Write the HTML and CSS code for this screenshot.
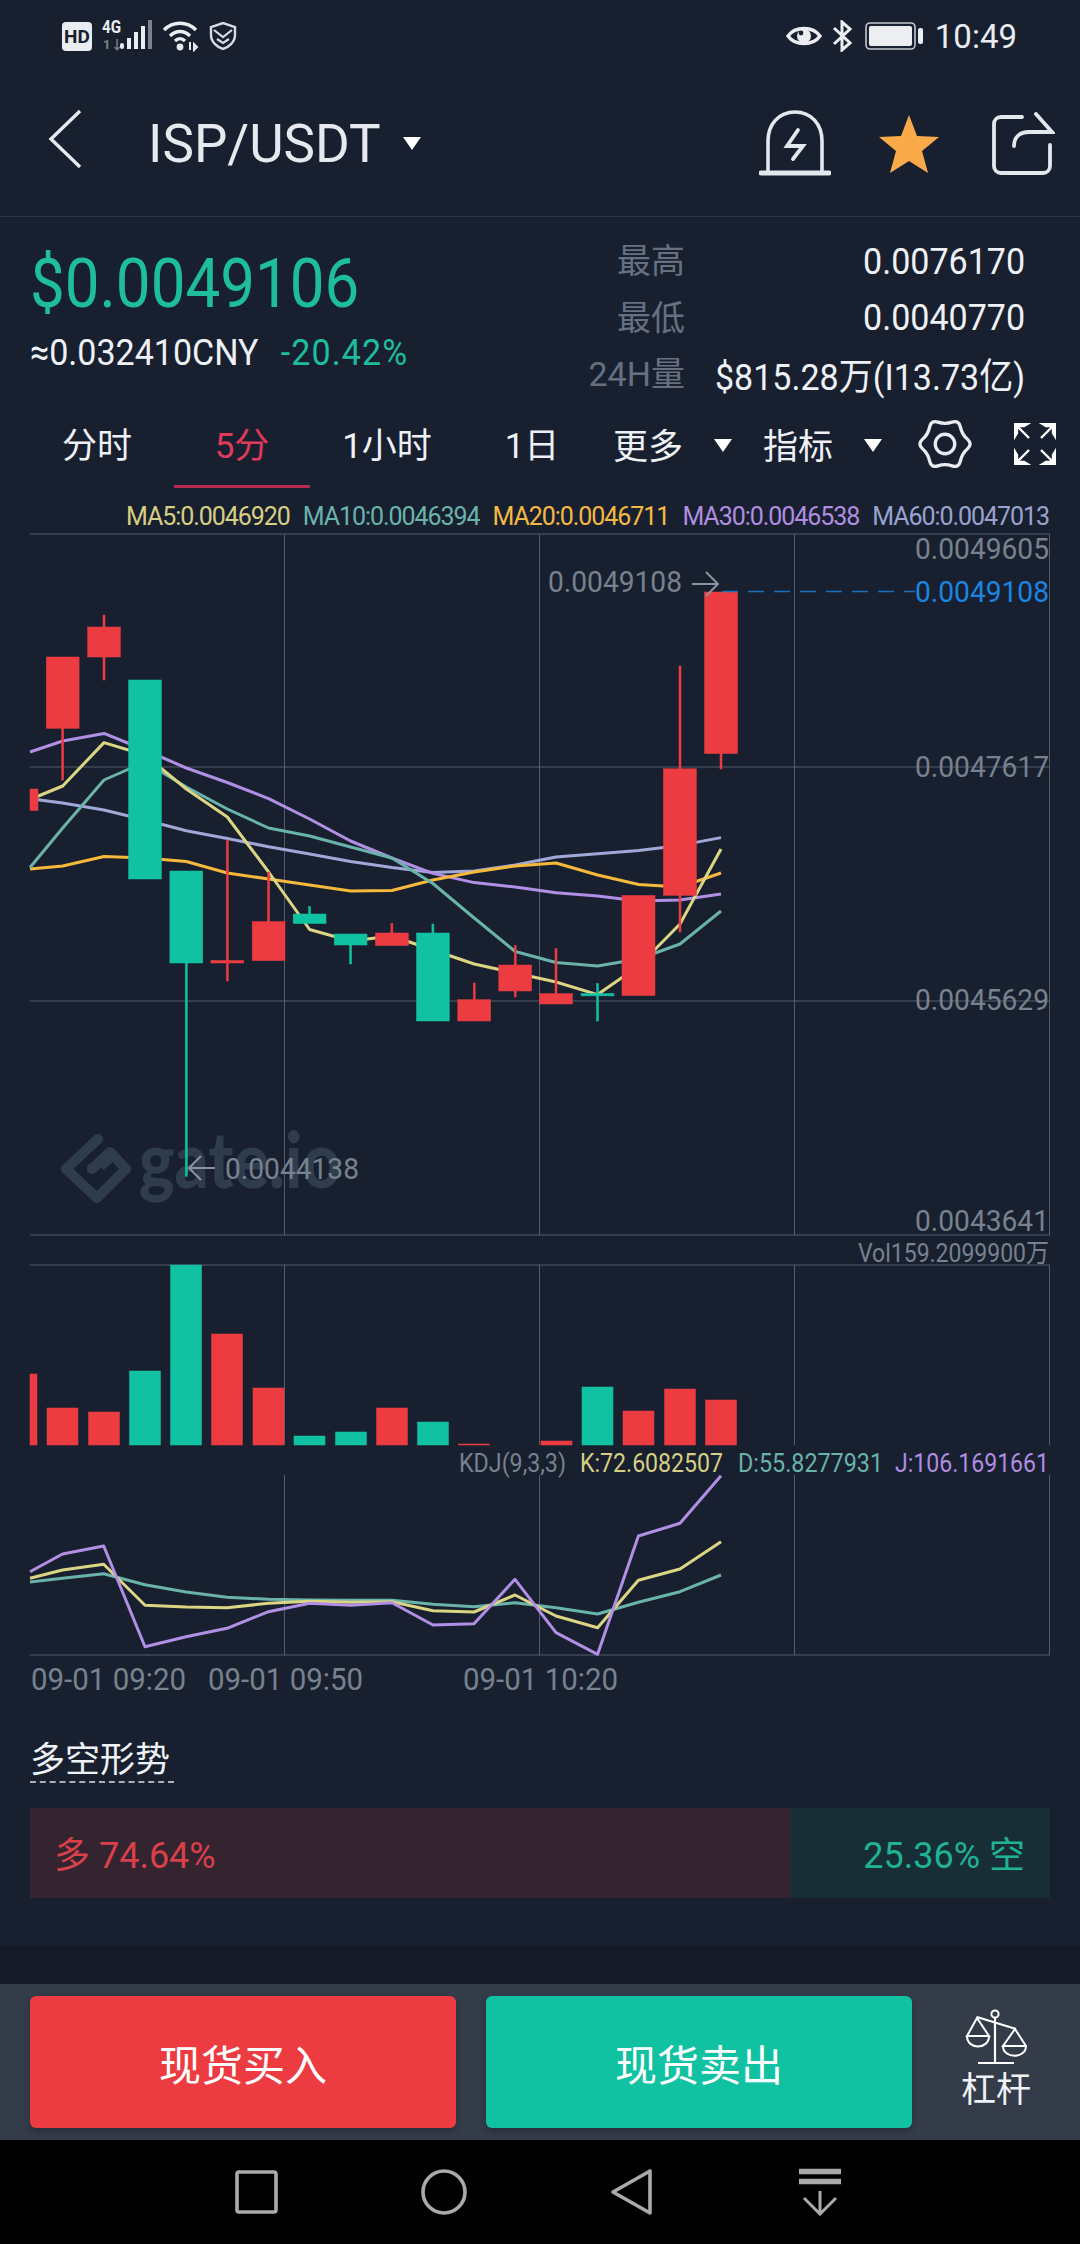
FILE: index.html
```html
<!DOCTYPE html>
<html lang="zh-CN">
<head>
    <meta charset="UTF-8">
    <meta name="viewport" content="width=device-width, initial-scale=1.0">
    <title>ISP/USDT</title>
    <link rel="stylesheet" href="styles.css">
</head>
<body>
    <div class="status-bar">
        <div class="status-left">
            <span class="hd">HD</span>
            <svg class="net" width="52" height="46" viewBox="0 -6 52 46">
                <text class="net-4g" x="0" y="14" textLength="19" lengthAdjust="spacingAndGlyphs">4G</text>
                <text class="net-dim" x="1" y="30">1↓</text>
                <rect class="bar" x="18" y="24" width="4" height="6" rx="2"/>
                <rect class="bar" x="25" y="19" width="4" height="11"/>
                <rect class="bar" x="32" y="13" width="4" height="17"/>
                <rect class="bar" x="39" y="7" width="4" height="23"/>
                <rect class="bar-dim" x="46" y="1" width="4" height="29"/>
            </svg>
            <svg class="wifi" width="38" height="32" viewBox="0 0 38 32">
                <path d="M2 10C11 1 25 1 34 10M8 16C14 10 22 10 28 16M13 21C16 18 20 18 23 21" fill="none" stroke="#e9ecf0" stroke-width="3.4"/>
                <circle cx="18" cy="27" r="3.4" fill="#e9ecf0"/>
                <path d="M28 30V22M32 24l3 3-3 3z" fill="none" stroke="#e9ecf0" stroke-width="2"/>
            </svg>
            <svg class="shield" width="28" height="28" viewBox="0 0 28 28">
                <path d="M14 1L26 5V13C26 20 20 25 14 27C8 25 2 20 2 13V5Z" fill="none" stroke="#d8dce2" stroke-width="2.4"/>
                <path d="M5 8L14 15L23 8M8 17L14 21L20 17" fill="none" stroke="#d8dce2" stroke-width="2.2"/>
            </svg>
        </div>
        <div class="status-right">
            <svg width="36" height="26" viewBox="0 0 36 26">
                <path d="M2 13C9 3 27 3 34 13C27 23 9 23 2 13Z" fill="none" stroke="#eceef2" stroke-width="3.4"/>
                <circle cx="18" cy="13" r="7" fill="#eceef2"/>
                <circle cx="15" cy="10" r="2.4" fill="#182130"/>
            </svg>
            <svg width="20" height="32" viewBox="0 0 20 32">
                <path d="M2 8L18 23L10 30V2L18 9L2 24" fill="none" stroke="#eceef2" stroke-width="3"/>
            </svg>
            <svg class="battery" width="58" height="28" viewBox="0 0 58 28">
                <rect x="1" y="1" width="49" height="26" rx="4" fill="none" stroke="#c4c8ce" stroke-width="1.6"/>
                <rect x="4" y="4" width="43" height="20" rx="2" fill="#eceef2"/>
                <rect x="53" y="6" width="5" height="16" rx="2" fill="#eceef2"/>
            </svg>
            <span class="clock">10:49</span>
        </div>
    </div>

    <header class="topbar">
        <svg class="back" width="34" height="60" viewBox="0 0 34 60">
            <path d="M32 2L3 30L32 58" fill="none" stroke="#e6e9ee" stroke-width="3.4"/>
        </svg>
        <h1 class="pair">ISP/USDT</h1>
        <span class="caret caret-pair"></span>
        <div class="top-actions">
            <svg width="72" height="70" viewBox="0 0 72 70">
                <path d="M9 62V32C9 15 20 3 36 3C52 3 63 15 63 32V62" fill="none" stroke="#e4e7ec" stroke-width="3.6"/>
                <path d="M2 64H70" stroke="#e4e7ec" stroke-width="5" stroke-linecap="round"/>
                <path d="M39 21L28 37H44L34 50" fill="none" stroke="#e4e7ec" stroke-width="3.8" stroke-linecap="round"/>
            </svg>
            <svg width="62" height="60" viewBox="0 0 62 60">
                <path d="M31 1L39 22L61 23L44 37L50 59L31 47L12 59L18 37L1 23L23 22Z" fill="#fbaa49"/>
            </svg>
            <svg width="64" height="64" viewBox="0 0 64 64">
                <path d="M31 5H10C6 5 3 8 3 12V54C3 58 6 61 10 61H52C56 61 59 58 59 54V33" fill="none" stroke="#e4e7ec" stroke-width="3.8" stroke-linecap="round"/>
                <path d="M23 34C23 25 29 20 38 20H61L45 2" fill="none" stroke="#e4e7ec" stroke-width="3.8" stroke-linecap="round"/>
            </svg>
        </div>
    </header>

    <section class="quote">
        <div class="quote-left">
            <div class="price">$0.0049106</div>
            <div class="sub-price">
                <span class="cny">≈0.032410CNY</span>
                <span class="change">-20.42%</span>
            </div>
        </div>
        <div class="stats">
            <span class="stat-label">最高</span><span class="stat-value">0.0076170</span>
            <span class="stat-label">最低</span><span class="stat-value">0.0040770</span>
            <span class="stat-label">24H量</span><span class="stat-value">$815.28万(I13.73亿)</span>
        </div>
    </section>

    <nav class="tabs">
        <span class="tab">分时</span>
        <span class="tab active">5分</span>
        <span class="tab">1小时</span>
        <span class="tab">1日</span>
        <span class="tab-drop more">更多<span class="caret"></span></span>
        <span class="tab-drop">指标<span class="caret"></span></span>
        <svg class="gear" width="56" height="52" viewBox="-30 -28 60 56">
            <path d="M24.1 -5.25Q30 0 24.1 5.25Q18.2 10.5 16.6 18.25Q15 26 7.5 23.5Q0 21 -7.5 23.5Q-15 26 -16.6 18.25Q-18.2 10.5 -24.1 5.25Q-30 0 -24.1 -5.25Q-18.2 -10.5 -16.6 -18.25Q-15 -26 -7.5 -23.5Q0 -21 7.5 -23.5Q15 -26 16.6 -18.25Q18.2 -10.5 24.1 -5.25Z" fill="none" stroke="#e8ebf0" stroke-width="3.6"/>
            <circle r="10.5" fill="none" stroke="#e8ebf0" stroke-width="3.6"/>
        </svg>
        <svg class="expand" width="42" height="42" viewBox="0 0 42 42">
            <path d="M0 0H15L10 3H3V10L0 15ZM3 3L15 15M42 0H27L32 3H39V10L42 15ZM39 3L27 15M0 42H15L10 39H3V32L0 27ZM3 39L15 27M42 42H27L32 39H39V32L42 27ZM39 39L27 27" fill="#fff" stroke="#fff" stroke-width="2.4"/>
        </svg>
    </nav>

    <div class="ma-legend">
        <span class="c-ma5">MA5:0.0046920</span>
        <span class="c-ma10">MA10:0.0046394</span>
        <span class="c-ma20">MA20:0.0046711</span>
        <span class="c-ma30">MA30:0.0046538</span>
        <span class="c-ma60">MA60:0.0047013</span>
    </div>

    <svg class="chart" width="1080" height="1170" viewBox="0 530 1080 1170">
        <!-- price pane grid -->
        <g class="grid">
            <path d="M30 534H1050M30 767H1050M30 1001H1050M30 1235H1050"/>
            <path d="M284.5 534V1235M539.5 534V1235M794.5 534V1235M1049.5 534V1235"/>
        </g>

        <!-- watermark -->
        <g class="watermark">
            <path d="M98 1139L66 1169L97 1198L126 1169L110 1152L92 1169" fill="none" stroke-width="10" stroke-linejoin="round" stroke-linecap="round"/>
            <path d="M88 1172V1165L103 1158V1154L112 1162L103 1170V1166L95 1172Z"/>
            <text class="watermark-text" x="139" y="1188" textLength="202" lengthAdjust="spacingAndGlyphs">gate.io</text>
        </g>

        <!-- moving averages -->
        <polyline class="line ma60" points="36,799.5 62.7,803 104,810 145,820 186.3,830.7 227.3,838.5 268.6,846.8 309.6,854 350.6,861.5 391.9,867.5 432.9,872.5 474.2,871 515.2,865 556,857 597.6,853.7 638.7,850.5 680,845.4 721,837.6"/>
        <polyline class="line ma30" points="30,752 62.7,741 104,733.4 145,750 186.3,768 227.3,782.5 268.6,798.6 309.6,819 350.6,841 391.9,858 432.9,873.4 474.2,882.6 515.2,887 556,892.7 597.6,896 638.7,901 680,900 721,894"/>
        <polyline class="line ma20" points="30,869 62.7,866 104,856.5 145,858 186.3,861.5 227.3,873 268.6,879 309.6,885 350.6,891 391.9,890.5 432.9,880 474.2,872 515.2,866 556,863 597.6,875 638.7,884.5 680,887 721,873"/>
        <polyline class="line ma10" points="30,867.5 62.7,828 104,780 145,762 186.3,787 227.3,809 268.6,828 309.6,836 350.6,847 391.9,858 432.9,883.5 474.2,918 515.2,951.5 556,962.5 597.6,966 638.7,959 680,944 721,911"/>
        <polyline class="line ma5" points="36,797 62.7,786 104,742.6 145,755 186.3,789 227.3,817 268.6,872 309.6,929.5 350.6,941 391.9,936 432.9,950 474.2,964 515.2,973 556,982 597.6,994.6 638.7,966 680,924 721,849"/>

        <!-- candles -->
        <g class="green">
            <rect x="128.6" y="680" width="32.8" height="199"/>
            <rect x="169.9" y="871" width="32.8" height="92"/>
            <rect x="185.3" y="963" width="2" height="213.5"/>
            <rect x="293.2" y="914" width="32.8" height="9.5"/>
            <rect x="308.6" y="906.5" width="2" height="8"/>
            <rect x="334.2" y="934" width="32.8" height="11"/>
            <rect x="349.6" y="945" width="2" height="19"/>
            <rect x="416.5" y="933" width="32.8" height="88"/>
            <rect x="431.9" y="924" width="2" height="9"/>
            <rect x="581.1" y="993.5" width="32.8" height="2.4"/>
            <rect x="596.5" y="983.6" width="2" height="37.4"/>
        </g>
        <g class="red">
            <rect x="30" y="789" width="8" height="21.5"/>
            <rect x="46.3" y="657" width="32.8" height="71.3"/>
            <rect x="61.7" y="728" width="2" height="52"/>
            <rect x="87.6" y="627" width="32.8" height="30"/>
            <rect x="103" y="615" width="2" height="65"/>
            <rect x="210.9" y="960.4" width="32.8" height="2.6"/>
            <rect x="226.3" y="840" width="2" height="141"/>
            <rect x="252.2" y="921.6" width="32.8" height="39"/>
            <rect x="267.6" y="872" width="2" height="50"/>
            <rect x="375.5" y="933" width="32.8" height="12.5"/>
            <rect x="390.9" y="923.5" width="2" height="10"/>
            <rect x="457.8" y="999.7" width="32.8" height="21.3"/>
            <rect x="473.2" y="983" width="2" height="17"/>
            <rect x="498.8" y="965" width="32.8" height="26"/>
            <rect x="514.2" y="945.5" width="2" height="51.5"/>
            <rect x="539.6" y="993.7" width="32.8" height="10.3"/>
            <rect x="555" y="948.7" width="2" height="45"/>
            <rect x="622" y="895.5" width="33" height="100"/>
            <rect x="663.4" y="768.8" width="33" height="126.5"/>
            <rect x="679" y="666" width="2" height="266"/>
            <rect x="704.5" y="592" width="33" height="161.6"/>
            <rect x="720" y="753" width="2" height="16"/>
        </g>

        <!-- price labels -->
        <path class="last-dash" d="M722 591.5H915"/>
        <g class="axis">
            <text x="915" y="559" textLength="134" lengthAdjust="spacingAndGlyphs">0.0049605</text>
            <text x="915" y="777" textLength="134" lengthAdjust="spacingAndGlyphs">0.0047617</text>
            <text x="915" y="1010" textLength="134" lengthAdjust="spacingAndGlyphs">0.0045629</text>
            <text x="915" y="1231" textLength="134" lengthAdjust="spacingAndGlyphs">0.0043641</text>
            <text x="548" y="592" textLength="134" lengthAdjust="spacingAndGlyphs">0.0049108</text>
            <text x="225" y="1179" textLength="134" lengthAdjust="spacingAndGlyphs">0.0044138</text>
        </g>
        <text class="axis axis-blue" x="915" y="602" textLength="134" lengthAdjust="spacingAndGlyphs">0.0049108</text>
        <path class="pointer" d="M692 584H717M706 572L718 584L706 596"/>
        <path class="pointer" d="M215 1168H189M201 1156L189 1168L201 1180"/>

        <!-- volume pane -->
        <text class="axis-small" x="858" y="1262" textLength="191" lengthAdjust="spacingAndGlyphs">Vol159.2099900万</text>
        <g class="grid">
            <path d="M30 1265H1050"/>
            <path d="M284.5 1265V1445M539.5 1265V1445M794.5 1265V1445M1049.5 1265V1445"/>
        </g>
        <g class="green">
            <rect x="129.5" y="1371" width="31" height="74"/>
            <rect x="170.5" y="1265" width="31" height="180"/>
            <rect x="294" y="1436" width="31" height="9"/>
            <rect x="335.5" y="1432" width="31" height="13"/>
            <rect x="417.5" y="1422" width="31" height="23"/>
            <rect x="582" y="1387" width="31" height="58"/>
        </g>
        <g class="red">
            <rect x="30" y="1374" width="7" height="71"/>
            <rect x="47" y="1408" width="31" height="37"/>
            <rect x="88.5" y="1412" width="31" height="33"/>
            <rect x="211.5" y="1334" width="31" height="111"/>
            <rect x="253" y="1388" width="31" height="57"/>
            <rect x="376.5" y="1408" width="31" height="37"/>
            <rect x="458.5" y="1444" width="31" height="1"/>
            <rect x="541" y="1441" width="31" height="4"/>
            <rect x="623" y="1411" width="31" height="34"/>
            <rect x="664.5" y="1389" width="31" height="56"/>
            <rect x="705.5" y="1400" width="31" height="45"/>
        </g>

        <!-- kdj pane -->
        <text class="axis-small" x="459" y="1472" textLength="107" lengthAdjust="spacingAndGlyphs">KDJ(9,3,3)</text>
        <text class="axis-small t-k" x="580" y="1472" textLength="143" lengthAdjust="spacingAndGlyphs">K:72.6082507</text>
        <text class="axis-small t-d" x="738" y="1472" textLength="145" lengthAdjust="spacingAndGlyphs">D:55.8277931</text>
        <text class="axis-small t-j" x="895" y="1472" textLength="154" lengthAdjust="spacingAndGlyphs">J:106.1691661</text>
        <g class="grid">
            <path d="M30 1655H1050"/>
            <path d="M284.5 1475V1655M539.5 1475V1655M794.5 1475V1655M1049.5 1475V1655"/>
        </g>
        <polyline class="line kdj-d" points="30,1582 62.5,1578.3 103.7,1573.7 145,1584.7 186,1592 227,1597.3 268.5,1599.3 309.7,1600 351,1600.3 392,1600.3 433,1604.3 474,1606.7 515,1602.7 556,1607.7 597.6,1614 638.4,1602.3 680,1591.7 721,1575"/>
        <polyline class="line kdj-k" points="30,1578.3 62.5,1570 103.7,1564.3 145,1605.3 186,1607 227,1607.7 268.5,1603.3 309.7,1601.3 351,1602.3 392,1601.7 433,1610.7 474,1612 515,1595 556,1616 597.6,1627.7 638.4,1580.3 680,1569 721,1541.7"/>
        <polyline class="line kdj-j" points="30,1571.7 62.5,1554 103.7,1546 145,1646.7 186,1636.7 227,1628.3 268.5,1611.7 309.7,1603.3 351,1605.3 392,1602.7 433,1625 474,1623.7 515,1579.3 556,1632.7 597.6,1654.3 638.4,1536 680,1523.3 721,1475.7"/>

        <!-- time axis -->
        <g class="axis time-axis">
            <text x="31" y="1690" textLength="155" lengthAdjust="spacingAndGlyphs">09-01 09:20</text>
            <text x="208" y="1690" textLength="155" lengthAdjust="spacingAndGlyphs">09-01 09:50</text>
            <text x="463" y="1690" textLength="155" lengthAdjust="spacingAndGlyphs">09-01 10:20</text>
        </g>
    </svg>

    <section class="sentiment">
        <h2 class="sentiment-title">多空形势</h2>
        <div class="ratio">
            <div class="ratio-long">多 74.64%</div>
            <div class="ratio-short">25.36% 空</div>
        </div>
    </section>

    <div class="spacer"></div>

    <div class="trade">
        <button class="trade-btn buy">现货买入</button>
        <button class="trade-btn sell">现货卖出</button>
        <div class="lever">
            <svg width="62" height="56" viewBox="0 0 62 56">
                <circle cx="30" cy="5" r="3.6" fill="none" stroke="#fff" stroke-width="2"/>
                <path d="M12 8L51 20M30 9V53M13 54H49" fill="none" stroke="#fff" stroke-width="2.2"/>
                <path d="M12 9L2 27H24ZM2 27C2 41 24 41 24 27M50 20L38 37H61ZM38 37C38 50 61 50 61 37" fill="none" stroke="#fff" stroke-width="2"/>
            </svg>
            <span>杠杆</span>
        </div>
    </div>

    <div class="navbar">
        <svg width="46" height="48" viewBox="0 0 46 48">
            <rect x="4" y="4" width="39" height="40" rx="2" fill="none" stroke="#aaa" stroke-width="3.6"/>
        </svg>
        <svg width="46" height="48" viewBox="0 0 46 48">
            <circle cx="23" cy="24" r="21" fill="none" stroke="#aaa" stroke-width="3.6"/>
        </svg>
        <svg width="46" height="48" viewBox="0 0 46 48">
            <path d="M41 3V45L4 24Z" fill="none" stroke="#aaa" stroke-width="3.6" stroke-linejoin="round"/>
        </svg>
        <svg width="46" height="48" viewBox="0 0 46 48">
            <path d="M2 3.5H44M2 13.5H44" stroke="#aaa" stroke-width="5.6"/>
            <path d="M23 23V46M7 30L23 46L39 30" fill="none" stroke="#aaa" stroke-width="3"/>
        </svg>
    </div>
</body>
</html>
```

FILE: styles.css
```css
* {
    box-sizing: border-box;
}

body {
    margin: 0;
    width: 1080px;
    height: 2244px;
    overflow: hidden;
    background-color: #182030;
    color: #eef1f5;
    font-family: Roboto, "Noto Sans CJK SC", sans-serif;
}

.status-bar {
    height: 72px;
    display: flex;
    align-items: center;
    justify-content: space-between;
    padding: 0 63px 0 62px;
}

.status-left,
.status-right {
    display: flex;
    align-items: center;
}

.hd {
    width: 30px;
    height: 29px;
    border-radius: 4px;
    background-color: #e9ecf0;
    color: #182030;
    font-size: 19px;
    font-weight: 700;
    line-height: 29px;
    text-align: center;
}

.net {
    margin-left: 10px;
}

.net-4g {
    font-size: 18px;
    font-weight: 700;
    fill: #e9ecf0;
}

.net-dim {
    font-size: 13px;
    font-weight: 700;
    fill: #7d838c;
}

.bar {
    fill: #e9ecf0;
}

.bar-dim {
    fill: #7d838c;
}

.wifi {
    margin-left: 8px;
}

.shield {
    margin-left: 9px;
}

.status-right {
    gap: 10px;
}

.battery {
    margin-left: 3px;
}

.clock {
    font-size: 33px;
    margin-left: 2px;
    color: #e9ecf0;
}

.topbar {
    height: 145px;
    display: flex;
    align-items: center;
    padding: 0 25px 0 48px;
    border-bottom: 1px solid #2b3443;
}

.back {
    margin-top: -11px;
}

.pair {
    margin: 0 0 0 66px;
    font-size: 53px;
    font-weight: 400;
    color: #e6e9ee;
}

.caret {
    display: inline-block;
    width: 0;
    height: 0;
    border-left: 9px solid transparent;
    border-right: 9px solid transparent;
    border-top: 13px solid #fff;
}

.caret-pair {
    margin-left: 22px;
    margin-top: -2px;
}

.top-actions {
    margin-left: auto;
    display: flex;
    align-items: center;
    gap: 47px;
}

.top-actions svg:last-child {
    margin-left: 4px;
}

.quote {
    height: 188px;
    display: flex;
    justify-content: space-between;
    padding: 16px 55px 0 30px;
}

.price {
    margin-top: 16px;
    font-size: 68px;
    line-height: 70px;
    color: #1ebd9d;
    transform: scaleX(0.91);
    transform-origin: left;
}

.sub-price {
    margin-top: 9px;
    font-size: 37px;
    line-height: 50px;
    white-space: nowrap;
    transform: scaleX(0.92);
    transform-origin: left;
}

.change {
    margin-left: 15px;
    letter-spacing: 1.2px;
    color: #1ebd9d;
}

.stats {
    display: grid;
    grid-template-columns: 100px 314px;
    column-gap: 26px;
    grid-auto-rows: 56.5px;
    align-items: center;
    justify-items: end;
    font-size: 34px;
    white-space: nowrap;
}

.stat-label {
    margin-top: -5px;
    color: #667080;
}

.stat-value {
    font-size: 37px;
    transform: scaleX(0.92);
    transform-origin: right;
}

.tabs {
    height: 83px;
    display: flex;
    align-items: center;
    padding: 0 0 0 29px;
    font-size: 35px;
}

.tab {
    width: 136px;
    height: 83px;
    margin-right: 9px;
    padding-top: 17px;
    line-height: 50px;
    text-align: center;
}

.tab.active {
    color: #e0395c;
    border-bottom: 3px solid #b62b52;
}

.tab-drop {
    display: flex;
    align-items: flex-start;
    gap: 31px;
    margin-top: 3px;
    line-height: 50px;
    margin-right: 31px;
}

.tab-drop .caret {
    margin-top: 16px;
}

.more {
    margin-left: 4px;
}

.gear {
    margin: -6px 0 0 4px;
}

.expand {
    margin: -6px 0 0 41px;
}

.ma-legend {
    height: 42px;
    padding: 15px 31px 0 0;
    display: flex;
    justify-content: flex-end;
    gap: 13px;
    font-size: 25px;
    letter-spacing: -1.05px;
    line-height: 27px;
}

.c-ma5 { color: #d7cf83; }
.c-ma10 { color: #69b3ab; }
.c-ma20 { color: #f4b942; }
.c-ma30 { color: #b08de0; }
.c-ma60 { color: #98a3cf; }

.chart {
    display: block;
}

.grid path {
    fill: none;
    stroke: #535c6a;
    stroke-width: 1;
}

.watermark {
    fill: #2f3c4c;
    stroke: #2f3c4c;
}

.watermark-text {
    font-family: Lato, sans-serif;
    font-size: 78px;
    font-weight: 900;
    stroke: none;
}

.line {
    fill: none;
    stroke-width: 3;
    stroke-linejoin: round;
}

.ma5, .kdj-k { stroke: #dcd583; }
.ma10, .kdj-d { stroke: #69b3ab; }
.ma20 { stroke: #f6b93b; }
.ma30, .kdj-j { stroke: #b18fe4; }
.ma60 { stroke: #a0a8d8; }

.green {
    fill: #10c2a2;
    stroke: #10c2a2;
    stroke-width: 0.5;
}

.red {
    fill: #ec3c42;
    stroke: #ec3c42;
    stroke-width: 0.5;
}

.axis {
    fill: #78818f;
    font-size: 30px;
}

.axis.axis-blue {
    fill: #1b84e0;
}

.time-axis {
    font-size: 32px;
}

.axis-small {
    fill: #78818f;
    font-size: 26px;
}

.t-k { fill: #d7cf83; }
.t-d { fill: #69b3ab; }
.t-j { fill: #b08de0; }

.last-dash {
    fill: none;
    stroke: #1b6fbd;
    stroke-width: 1.6;
    stroke-dasharray: 16 10;
}

.pointer {
    fill: none;
    stroke: #8b93a1;
    stroke-width: 2;
}

.sentiment {
    height: 246px;
    padding: 36px 30px 0;
}

.sentiment-title {
    width: 144px;
    height: 47px;
    margin: 0;
    font-size: 35px;
    font-weight: 400;
    line-height: 50px;
    white-space: nowrap;
    border-bottom: 2px dashed #aab0b9;
}

.ratio {
    display: flex;
    height: 90px;
    margin-top: 25px;
    font-size: 36px;
    line-height: 96px;
}

.ratio-long {
    width: 760px;
    padding-left: 24px;
    background-color: #332430;
    color: #d9404a;
}

.ratio-short {
    flex: 1;
    padding-right: 25px;
    text-align: right;
    background-color: #182e36;
    color: #1fb394;
}

.spacer {
    height: 38px;
    background-color: #141a26;
}

.trade {
    height: 156px;
    display: flex;
    padding: 12px 0 12px 30px;
    gap: 30px;
    background-color: #343c49;
}

.trade-btn {
    width: 426px;
    height: 132px;
    border: none;
    border-radius: 6px;
    color: #fff;
    font-family: inherit;
    font-size: 42px;
    box-shadow: 0 3px 6px rgba(0, 0, 0, 0.25);
}

.buy {
    background-color: #ec3c42;
}

.sell {
    background-color: #10c2a2;
}

.lever {
    width: 168px;
    margin-left: -30px;
    padding-top: 13px;
    display: flex;
    flex-direction: column;
    align-items: center;
    font-size: 35px;
    line-height: 46px;
}

.lever span {
    margin-top: 3px;
}

.navbar {
    height: 104px;
    display: flex;
    align-items: center;
    padding-left: 233px;
    gap: 142px;
    background-color: #000;
}
```
